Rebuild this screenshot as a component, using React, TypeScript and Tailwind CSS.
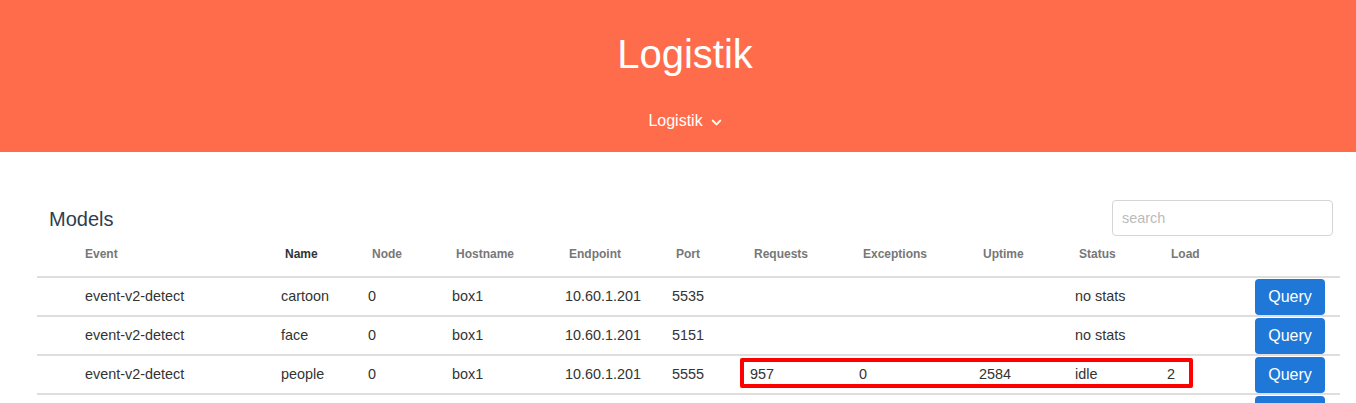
import { ChevronDown } from "lucide-react";

type Model = {
  event: string;
  name: string;
  node: string;
  host: string;
  endpoint: string;
  port: string;
  requests: string;
  exceptions: string;
  uptime: string;
  status: string;
  load: string;
  flagged?: boolean;
  stub?: boolean;
};

const models: Model[] = [
  { event: "event-v2-detect", name: "cartoon", node: "0", host: "box1", endpoint: "10.60.1.201", port: "5535", requests: "", exceptions: "", uptime: "", status: "no stats", load: "" },
  { event: "event-v2-detect", name: "face", node: "0", host: "box1", endpoint: "10.60.1.201", port: "5151", requests: "", exceptions: "", uptime: "", status: "no stats", load: "" },
  { event: "event-v2-detect", name: "people", node: "0", host: "box1", endpoint: "10.60.1.201", port: "5555", requests: "957", exceptions: "0", uptime: "2584", status: "idle", load: "2", flagged: true },
  { event: "", name: "", node: "", host: "", endpoint: "", port: "", requests: "", exceptions: "", uptime: "", status: "", load: "", stub: true },
];

const Header = () => (
  <div className="flex h-[42px] border-b-2 border-[#dedede] pt-[11px] text-[12px] font-bold leading-[14px] text-[#777]">
    <div className="w-[244px] pl-[48px]">Event</div>
    <div className="w-[87px] pl-1 text-[#333]">Name</div>
    <div className="w-[84px] pl-1">Node</div>
    <div className="w-[113px] pl-1">Hostname</div>
    <div className="w-[107px] pl-1">Endpoint</div>
    <div className="w-[78px] pl-1">Port</div>
    <div className="w-[109px] pl-1">Requests</div>
    <div className="w-[120px] pl-1">Exceptions</div>
    <div className="w-[96px] pl-1">Uptime</div>
    <div className="w-[92px] pl-1">Status</div>
    <div className="w-[88px] pl-1">Load</div>
  </div>
);

const Row = ({ m }: { m: Model }) => (
  <div className="relative flex h-[39px] items-center border-b-2 border-[#dedede] text-[14.4px] text-[#333]">
    <div className="w-[244px] pl-[48px]">{m.event}</div>
    <div className="w-[87px]">{m.name}</div>
    <div className="w-[84px]">{m.node}</div>
    <div className="w-[113px]">{m.host}</div>
    <div className="w-[107px]">{m.endpoint}</div>
    <div className="w-[78px]">{m.port}</div>
    <div className="w-[109px]">{m.requests}</div>
    <div className="w-[120px]">{m.exceptions}</div>
    <div className="w-[96px]">{m.uptime}</div>
    <div className="w-[92px]">{m.status}</div>
    <div className="w-[88px]">{m.load}</div>
    <button className="h-[36px] w-[70px] rounded-[4px] bg-[#1f77d7] text-[16px] text-white">
      {m.stub ? "" : "Query"}
    </button>
    {m.flagged && (
      <div className="pointer-events-none absolute left-[703px] top-[2px] h-[30px] w-[453px] rounded-[2px] border-4 border-[#ff0000]" />
    )}
  </div>
);

export default function App() {
  return (
    <div className="h-[403px] overflow-hidden bg-white font-['Liberation_Sans',Arial,sans-serif]">
      <header className="flex h-[152px] flex-col items-center bg-[#ff6c4b] pl-[14px] text-white">
        <h1 className="mt-[30px] text-[40px] leading-[48px]">Logistik</h1>
        <div className="mt-[31px] flex items-center gap-[6px] pl-[2px] text-[16px]">
          Logistik
          <ChevronDown size={15} strokeWidth={3.2} className="mt-[3px]" />
        </div>
      </header>

      <div className="pl-[37px] pr-[16px] pt-[48px]">
        <div className="flex h-[36px] items-center justify-between pl-[12px] pr-[7px]">
          <h2 className="mt-[2px] text-[20px] text-[#2c3e50]">Models</h2>
          <input
            placeholder="search"
            className="h-[36px] w-[221px] rounded-[4px] border border-[#d5d5d5] px-[9px] text-[14.4px] outline-none placeholder:text-[#bbb]"
          />
        </div>
        <Header />
        {models.map((m, i) => (
          <Row key={i} m={m} />
        ))}
      </div>
    </div>
  );
}
